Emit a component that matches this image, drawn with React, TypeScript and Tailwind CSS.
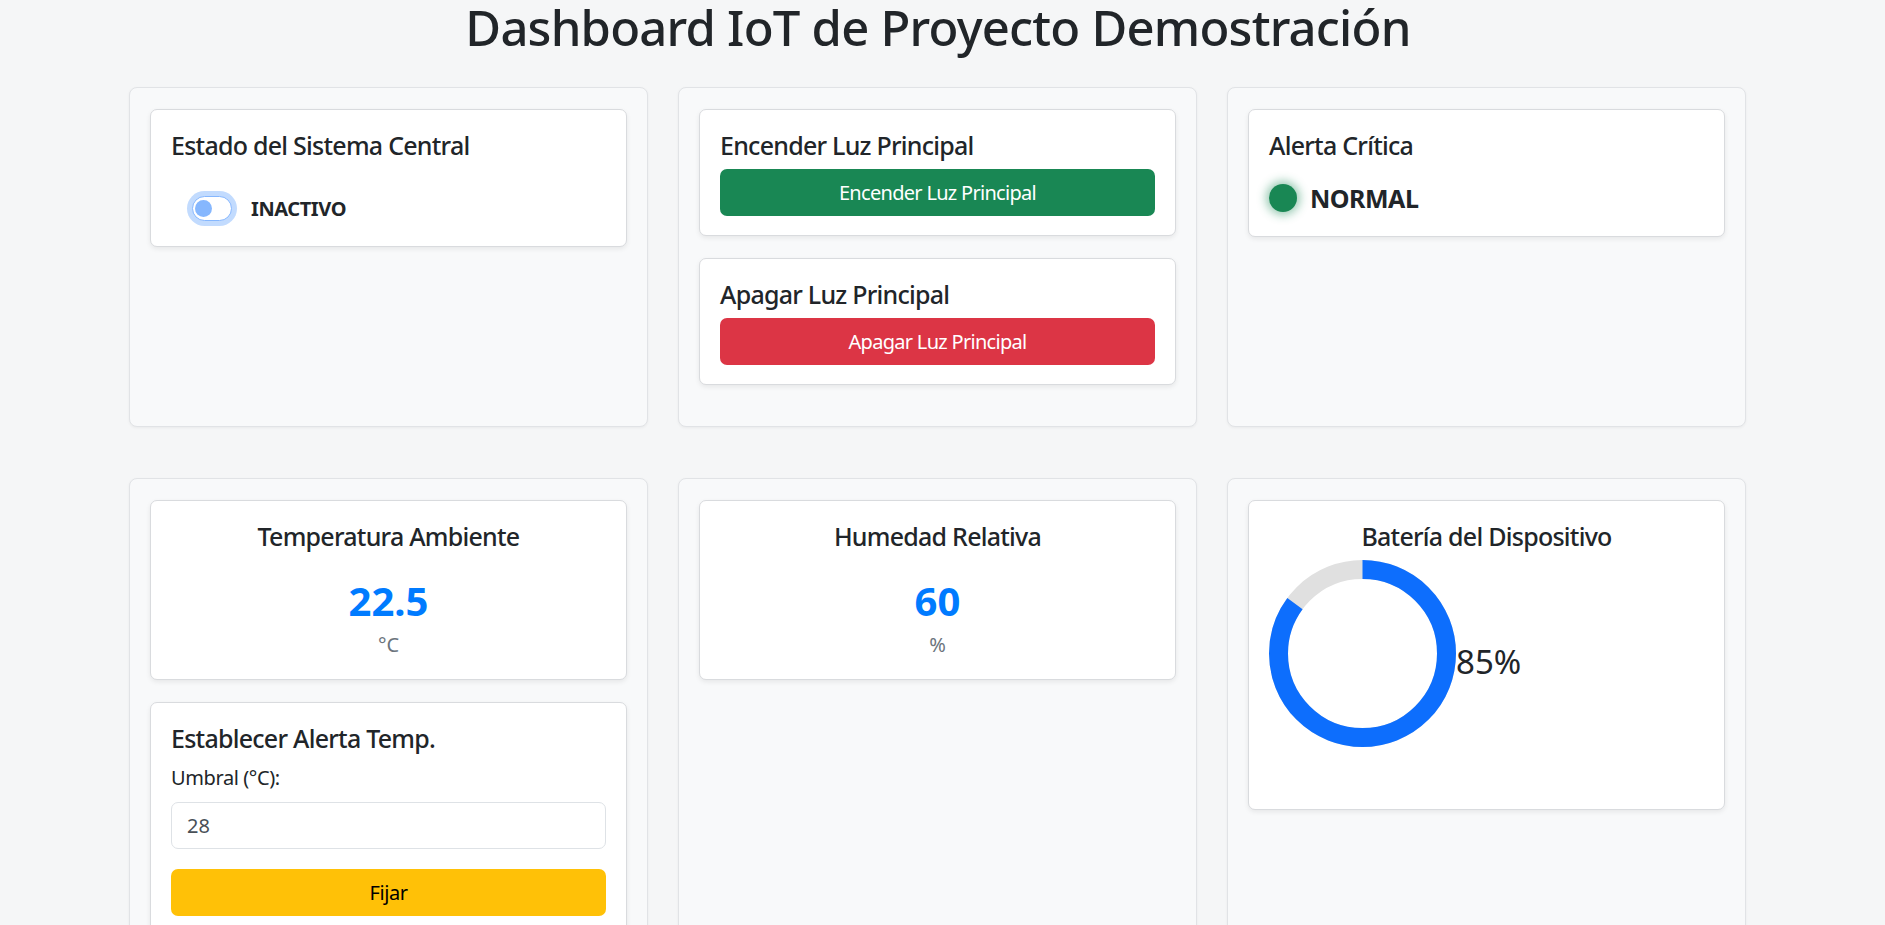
import React from "react";

const Card = ({ children, className = "" }: { children: React.ReactNode; className?: string }) => (
  <div
    className={
      "rounded-[7px] border border-[#d9dbde] bg-white px-[20px] pt-[20px] shadow-[0_2px_5px_rgba(0,0,0,0.075)] " +
      className
    }
  >
    {children}
  </div>
);

const Panel = ({ children }: { children: React.ReactNode }) => (
  <div className="flex flex-col gap-[22px] rounded-[8px] border border-[#e1e3e6] bg-[#f8f9fa] px-[20px] pb-[41px] pt-[21px] shadow-[0_1px_3px_rgba(0,0,0,0.05)]">
    {children}
  </div>
);

const Title = ({ children, center = false }: { children: React.ReactNode; center?: boolean }) => (
  <h5 className={"text-[25px] font-medium leading-[30px] tracking-[-0.03em] " + (center ? "text-center" : "")}>
    {children}
  </h5>
);

const Donut = () => {
  const size = 187;
  const sw = 19;
  const r = (size - sw) / 2;
  const c = 2 * Math.PI * r;
  return (
    <svg width={size} height={size} viewBox={`0 0 ${size} ${size}`} className="shrink-0">
      <circle cx={size / 2} cy={size / 2} r={r} fill="none" stroke="#e0e0e0" strokeWidth={sw} />
      <circle
        cx={size / 2}
        cy={size / 2}
        r={r}
        fill="none"
        stroke="#0d6efd"
        strokeWidth={sw}
        strokeDasharray={`${c * 0.85} ${c}`}
        transform={`rotate(-90 ${size / 2} ${size / 2})`}
      />
    </svg>
  );
};

export default function App() {
  return (
    <div className="h-[925px] w-full overflow-hidden bg-[#f5f6f7] font-['Noto_Sans',sans-serif] text-[#212529]">
      <div className="ml-[129px] w-[1618px]">
        <h1 className="text-center text-[49px] font-medium leading-[55px] tracking-[-0.016em]">
          Dashboard IoT de Proyecto Demostración
        </h1>
        <div className="mt-[32px] grid grid-cols-[519px_519px_519px] gap-x-[30px] gap-y-[51px]">
          {/* Row 1 */}
          <Panel>
            <Card className="pb-[20px]">
              <Title>Estado del Sistema Central</Title>
              <div className="mt-[31px] flex h-[35px] items-center pl-[21px]">
                <div className="relative h-[25px] w-[40px] rounded-full border border-[#86b7fe] bg-white shadow-[0_0_0_5px_rgba(13,110,253,0.25)]">
                  <div className="absolute left-[2px] top-[3px] h-[17px] w-[17px] rounded-full bg-[#86b7fe]" />
                </div>
                <span className="ml-[19px] text-[20px] font-bold tracking-[-0.02em]">INACTIVO</span>
              </div>
            </Card>
          </Panel>
          <Panel>
            <Card className="pb-[19px]">
              <Title>Encender Luz Principal</Title>
              <button className="mt-[9px] flex h-[47px] w-full items-center justify-center rounded-[7px] bg-[#198754] text-[20px] tracking-[-0.035em] text-white">
                Encender Luz Principal
              </button>
            </Card>
            <Card className="pb-[19px]">
              <Title>Apagar Luz Principal</Title>
              <button className="mt-[9px] flex h-[47px] w-full items-center justify-center rounded-[7px] bg-[#dc3545] text-[20px] tracking-[-0.035em] text-white">
                Apagar Luz Principal
              </button>
            </Card>
          </Panel>
          <Panel>
            <Card className="pb-[23px]">
              <Title>Alerta Crítica</Title>
              <div className="mt-[23px] flex h-[30px] items-center">
                <div className="h-[28px] w-[28px] rounded-full bg-[#198754] shadow-[0_0_10px_3px_rgba(25,135,84,0.45)]" />
                <span className="ml-[13px] text-[25px] font-bold leading-[30px] tracking-[-0.02em]">NORMAL</span>
              </div>
            </Card>
          </Panel>

          {/* Row 2 */}
          <Panel>
            <Card className="pb-[19px]">
              <Title center>Temperatura Ambiente</Title>
              <div className="mt-[26px] text-center text-[40px] font-bold leading-[48px] text-[#007bff]">
                22.5
              </div>
              <div className="mt-[5px] text-center text-[20px] leading-[30px] text-[#6c757d]">°C</div>
            </Card>
            <Card className="pb-[20px]">
              <Title>Establecer Alerta Temp.</Title>
              <div className="mt-[10px] text-[20px] leading-[30px] tracking-[-0.02em]">Umbral (°C):</div>
              <div className="mt-[9px] flex h-[47px] items-center rounded-[7px] border border-[#dee2e6] bg-white px-[15px] text-[20px] text-[#495057]">
                28
              </div>
              <button className="mt-[20px] flex h-[47px] w-full items-center justify-center rounded-[7px] bg-[#ffc107] text-[20px] tracking-[-0.02em] text-black">
                Fijar
              </button>
            </Card>
          </Panel>
          <Panel>
            <Card className="pb-[19px]">
              <Title center>Humedad Relativa</Title>
              <div className="mt-[26px] text-center text-[40px] font-bold leading-[48px] text-[#007bff]">
                60
              </div>
              <div className="mt-[5px] text-center text-[20px] leading-[30px] text-[#6c757d]">%</div>
            </Card>
          </Panel>
          <Panel>
            <Card className="pb-[62px]">
              <Title center>Batería del Dispositivo</Title>
              <div className="mt-[9px] flex items-start">
                <Donut />
                <span className="mt-[82px] text-[33px] leading-[40px]">85%</span>
              </div>
            </Card>
          </Panel>
        </div>
      </div>
    </div>
  );
}
